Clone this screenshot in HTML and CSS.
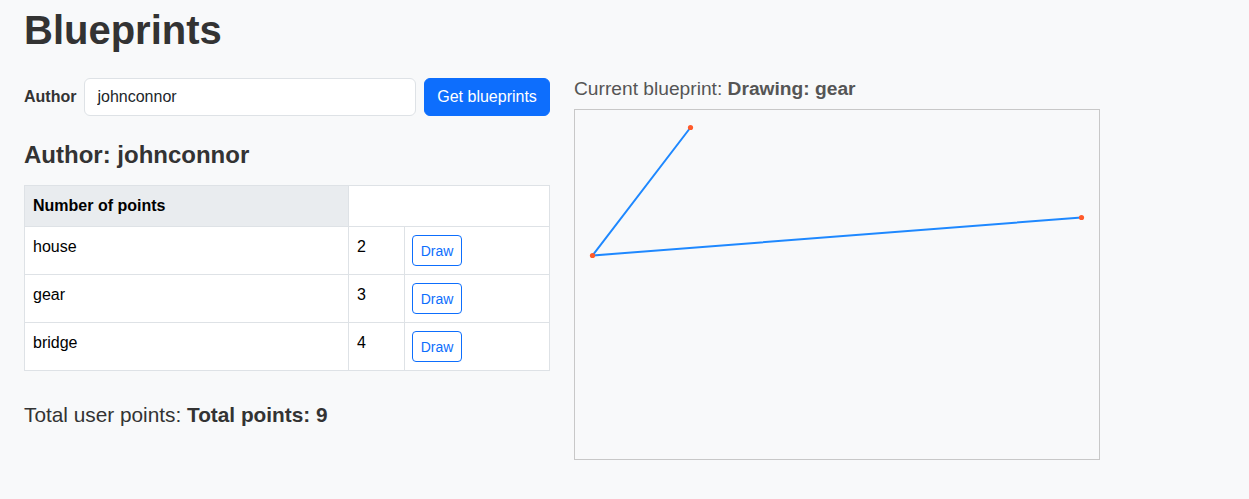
FILE: index.html
```html
<!DOCTYPE html>
<html>
<head>
<meta charset="utf-8">
<link rel="stylesheet" href="styles.css">
</head>
<body>
<div class="page">
  <h1 class="title">Blueprints</h1>
  <div class="layout">
    <div class="left">
      <form class="search">
        <label class="search-label">Author</label>
        <input class="search-input" type="text" value="johnconnor">
        <button class="btn-primary" type="button">Get blueprints</button>
      </form>
      <h2 class="author">Author: johnconnor</h2>
      <table class="bp-table">
        <thead>
          <tr><th class="th-head">Number of points</th><th class="th-blank" colspan="2"></th></tr>
        </thead>
        <tbody>
          <tr><td class="c-name">house</td><td class="c-num">2</td><td class="c-act"><button class="btn-draw" type="button">Draw</button></td></tr>
          <tr><td class="c-name">gear</td><td class="c-num">3</td><td class="c-act"><button class="btn-draw" type="button">Draw</button></td></tr>
          <tr><td class="c-name">bridge</td><td class="c-num">4</td><td class="c-act"><button class="btn-draw" type="button">Draw</button></td></tr>
        </tbody>
      </table>
      <p class="total">Total user points: <b>Total points: 9</b></p>
    </div>
    <div class="right">
      <p class="current">Current blueprint: <b>Drawing: gear</b></p>
      <div class="canvas">
        <svg width="524" height="349" viewBox="0 0 524 349">
          <polyline points="115.5,17.5 17.5,145.5 506.5,107.5" fill="none" stroke="#1e88ff" stroke-width="2"/>
          <circle cx="115.5" cy="17.5" r="2.6" fill="#ff5a2a"/>
          <circle cx="17.5" cy="145.5" r="2.6" fill="#ff5a2a"/>
          <circle cx="506.5" cy="107.5" r="2.6" fill="#ff5a2a"/>
        </svg>
      </div>
    </div>
  </div>
</div>
</body>
</html>
```
FILE: styles.css
```css
* { box-sizing: border-box; }
html, body { margin: 0; padding: 0; }
body {
  background: #f8f9fa;
  font-family: "Liberation Sans", Arial, sans-serif;
  color: #333;
  font-size: 16px;
  line-height: 1.5;
}
.page { padding: 0 24px; }
.title {
  margin: 0;
  padding-top: 6px;
  font-size: 40px;
  line-height: 48px;
  font-weight: 700;
  color: #333;
}
.layout {
  display: flex;
  gap: 24px;
  margin-top: 24px;
}
.left { width: 526px; }
.right { width: 526px; }
.search {
  display: flex;
  align-items: center;
  gap: 8px;
  margin: 0;
}
.search-label { font-weight: 700; color: #333; }
.search-input {
  width: 332px;
  height: 38px;
  border: 1px solid #dee2e6;
  border-radius: 6px;
  background: #fff;
  padding: 6px 12px;
  font: inherit;
  color: #212529;
}
.btn-primary {
  width: 126px;
  height: 38px;
  border: 1px solid #0d6efd;
  border-radius: 6px;
  background: #0d6efd;
  color: #fff;
  font: inherit;
  padding: 0;
}
.author {
  margin: 24px 0 0;
  font-size: 24px;
  line-height: 29px;
  font-weight: 700;
  color: #333;
}
.bp-table {
  margin-top: 16px;
  width: 526px;
  border-collapse: collapse;
  background: #fff;
  color: #000;
}
.bp-table th, .bp-table td {
  border: 1px solid #dee2e6;
  padding: 8px;
  text-align: left;
  vertical-align: top;
}
.th-head {
  background: #e9ecef;
  font-weight: 700;
  height: 41px;
  padding-top: 9px;
  width: 324px;
}
.th-blank { background: #fff; }
.bp-table td { height: 48px; }
.c-name { width: 324px; }
.c-num { width: 56px; }
.bp-table td.c-act { padding: 8px 8px 7px 7px; }
.btn-draw {
  width: 50px;
  height: 31px;
  border: 1px solid #0d6efd;
  border-radius: 4px;
  background: #fff;
  color: #0d6efd;
  font-family: inherit;
  font-size: 14px;
  padding: 0;
  display: block;
}
.total {
  margin: 30px 0 0;
  font-size: 20.8px;
  line-height: 28px;
  color: #333;
}
.current {
  margin: 0;
  font-size: 19.2px;
  line-height: 22px;
  color: #555;
}
.canvas {
  margin-top: 9px;
  width: 526px;
  height: 351px;
  border: 1px solid #c8c8c8;
}
.canvas svg { display: block; }
```
